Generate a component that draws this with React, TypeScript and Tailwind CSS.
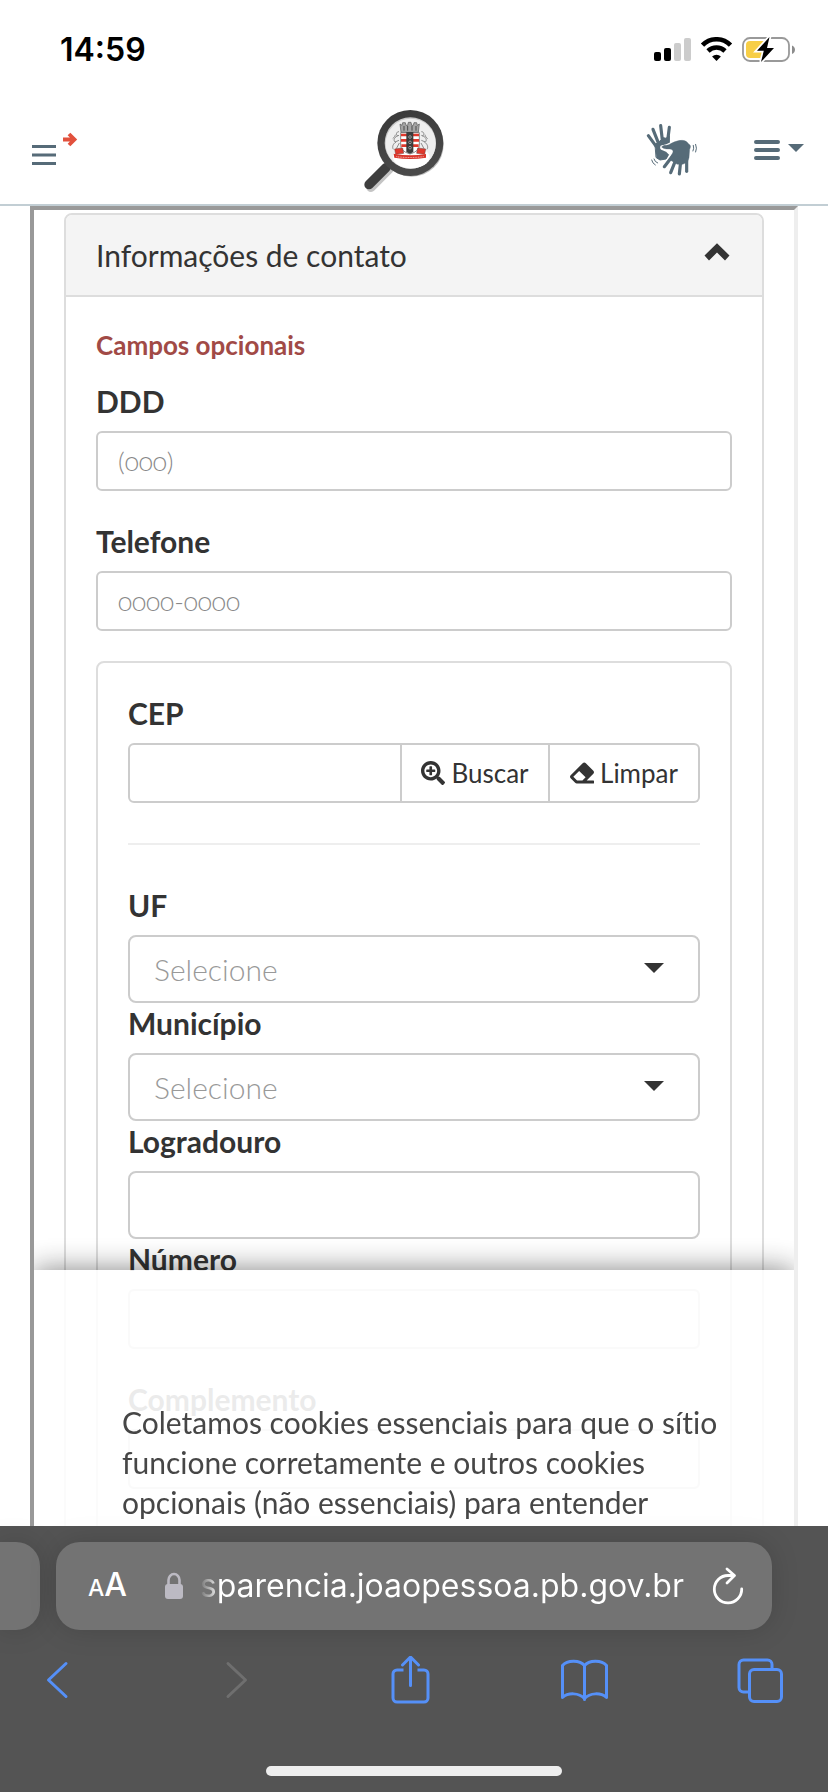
import React from "react";
import { FaEraser, FaSearchPlus } from "react-icons/fa";

function StatusBar() {
  return (
    <div className="flex h-[100px] items-center justify-between pr-8 pl-[60px] font-['Inter',sans-serif]">
      <span className="text-[32px] leading-10 font-semibold text-black">14:59</span>
      <svg className="h-[26px] w-[142px]" viewBox="0 0 142 26" role="img" aria-label="Sinal, Wi-Fi e bateria">
        <rect x="0" y="15" width="7" height="9" rx="2" />
        <rect x="10" y="11" width="7" height="13" rx="2" />
        <rect x="20" y="6" width="7" height="18" rx="2" fill="#cccccc" />
        <rect x="30" y="1" width="7" height="23" rx="2" fill="#cccccc" />
        <g fill="none" stroke="#000" strokeWidth="4.6">
          <path d="M48.5 8.2a19.5 19.5 0 0 1 28 0" />
          <path d="M54 14a12.2 12.2 0 0 1 17 0" />
        </g>
        <path d="M62.5 24l-4.4-4.6a6.4 6.4 0 0 1 8.8 0z" />
        <rect x="89" y="1" width="46" height="23" rx="7" fill="none" stroke="#999" strokeWidth="1.8" />
        <path d="M138 8.5c4 1.500 4 7 0 8.500z" fill="#8c8c8c" />
        <rect x="92" y="4" width="20" height="17" rx="4" fill="#f7ce46" />
        <path d="M115.500 0L103 13.800h6.800L107 25l13-14h-7z" stroke="#fff" strokeWidth="3.500" paintOrder="stroke" />
      </svg>
    </div>
  );
}

function Logo() {
  return (
    <svg className="h-[84px] w-[84px]" viewBox="36 38 252 252" role="img" aria-label="Transparência João Pessoa">
      <defs>
        <linearGradient id="ring" x1="0" y1="0" x2="0.3" y2="1">
          <stop offset="0" stopColor="#383838" />
          <stop offset="1" stopColor="#4a4a4a" />
        </linearGradient>
      </defs>
      <circle cx="185" cy="148" r="96" fill="#bdbdbd" />
      <path d="M118 220L63 276" stroke="#c4c4c4" strokeWidth="28" strokeLinecap="round" />
      <path d="M108 217L57 268" stroke="#3e3e3e" strokeWidth="28" strokeLinecap="round" />
      <circle cx="181" cy="143" r="99" fill="url(#ring)" />
      <circle cx="181" cy="143" r="77" fill="#c9c9c9" />
      <circle cx="182" cy="145" r="75" fill="#eeeeee" />
      <ellipse cx="184" cy="186" rx="55" ry="32" fill="#fff" />
      <path d="M150 86l6 4 2-8h8l2 8h5l2-9h8l2 9h5l2-8h8l2 8 6-4-3 25h-52z" fill="#a4a4a4" stroke="#555" strokeWidth="2" />
      <path d="M162 92v14M173 92v14M186 92v14M198 92v14" stroke="#4b4b4b" strokeWidth="3" />
      <path d="M152 112h56v38q0 18-28 26q-28-8-28-26z" fill="#fff" stroke="#555" strokeWidth="2" />
      <path d="M153 119h54M153 135h54M154 151h52" stroke="#e0382c" strokeWidth="8" />
      <path d="M169 110h21v60l-10 5-11-5z" fill="#3c3c3c" />
      <circle cx="180" cy="125" r="4" fill="none" stroke="#bbb" strokeWidth="2" />
      <circle cx="180" cy="141" r="4" fill="none" stroke="#bbb" strokeWidth="2" />
      <circle cx="180" cy="157" r="4" fill="none" stroke="#bbb" strokeWidth="2" />
      <g fill="none" stroke="#777" strokeWidth="2.500">
        <path d="M147 109c-10 0-9 12-3 13M147 120c-14 4-18 14-12 20l12-5M138 140c-10 6-12 16-8 22M148 143l-9 17M128 130c5-4 7-7 8-12" />
        <path d="M214 109c10 0 9 12 3 13M214 120c14 4 18 14 12 20l-12-5M223 140c10 6 12 16 8 22M213 143l9 17M233 130c-5-4-7-7-8-12" />
      </g>
      <path d="M134 161l24-3 3 16-24 3zM227 161l-24-3-3 16 24 3z" fill="#e0382c" stroke="#6b3a36" strokeWidth="1.500" />
      <path d="M131 175q49 9 97 1v11q-48 8-95 0z" fill="#d93429" />
      <path d="M139 184q41 5 82 0" fill="none" stroke="#f6c3bf" strokeWidth="3" strokeDasharray="3 2" />
    </svg>
  );
}

function HandsIcon() {
  return (
    <svg className="h-[54px] w-[52px]" viewBox="76 54 156 162" fill="#566b78" stroke="#566b78" strokeLinecap="round" strokeLinejoin="round" aria-hidden="true">
      <g strokeWidth="9.500">
        <path d="M83 92L107 125" />
        <path d="M97 73L114 116" />
        <path d="M120 62L126 114" />
        <path d="M146 67L140 114" />
      </g>
      <path d="M104 118L118 108L128 98L136 100L146 92L146 116L154 126L150 146L136 162L118 165L107 158Z" strokeWidth="3" />
      <g stroke="#fff" fill="#fff" strokeWidth="11">
        <path d="M124 126C140 126 160 109 184 106L207 121L206 150L198 166L172 172L152 168L130 188L152 148L140 136L124 129Z" />
      </g>
      <path d="M124 126C126 120 136 121 142 120C156 114 166 106 184 106C194 106 200 111 204 117C212 122 210 126 207 133L205 158L200 172L186 178L170 178L152 167L146 164L156 144C159 138 156 133 148 132C140 132 126 132 124 126Z" strokeWidth="1" />
      <g strokeWidth="9.500">
        <path d="M158 150L131 185" />
        <path d="M168 158L150 203" />
        <path d="M181 160L176 207" />
        <path d="M198 155L198 199" />
      </g>
      <g fill="none" strokeWidth="3">
        <path d="M218 121Q221 130 217 138M225 118Q230 130 225 141" />
        <path d="M100 162Q102 171 111 174M93 165Q95 175 104 180" />
      </g>
    </svg>
  );
}

function NavBar() {
  return (
    <nav className="flex h-[104px] items-center justify-between pr-6 pb-1 pl-[30px]">
      <button type="button" aria-label="Abrir menu" className="flex h-20 w-[132px] items-center">
        <svg className="h-[38px] w-[48px]" viewBox="0 0 48 38" fill="none" aria-hidden="true">
          <path d="M2 15.500h24M2 24h24M2 32.500h24" stroke="#566b78" strokeWidth="3" />
          <path d="M33 8.500h12M39 3l5.500 5.500L39 14" stroke="#e2513d" strokeWidth="3.800" />
        </svg>
      </button>
      <Logo />
      <div className="flex w-[158px] items-center justify-between">
        <button type="button" aria-label="Libras">
          <HandsIcon />
        </button>
        <button type="button" aria-label="Opções">
          <svg className="h-6 w-[50px]" viewBox="0 0 50 24" aria-hidden="true">
            <path d="M2 4h22M2 12h22M2 20h22" stroke="#566b78" strokeWidth="4" strokeLinecap="round" />
            <path d="M34 6h16l-8 8z" fill="#566b78" />
          </svg>
        </button>
      </div>
    </nav>
  );
}

const labelClass = "mb-[10px] block text-[30px] leading-10 font-bold text-[#333]";

function TextField({ id, label, placeholder, tall = false }: { id: string; label: string; placeholder?: string; tall?: boolean }) {
  return (
    <div className={tall ? "" : "mb-[30px]"}>
      <label htmlFor={id} className={labelClass}>
        {label}
      </label>
      <input
        id={id}
        type="text"
        placeholder={placeholder}
        className={
          "block w-full border-2 border-[#ccc] bg-white px-5 text-[26px] oldstyle-nums text-[#333] placeholder:font-light placeholder:text-[#888] " +
          (tall ? "h-[68px] rounded-lg" : "h-[60px] rounded-md")
        }
      />
    </div>
  );
}

function SelectField({ id, label }: { id: string; label: string }) {
  return (
    <div>
      <label htmlFor={id} className={labelClass}>
        {label}
      </label>
      <div className="relative">
        <select id={id} className="block h-[68px] w-full appearance-none rounded-lg border-2 border-[#ccc] bg-white px-6 text-[30px] font-light text-[#999]">
          <option>Selecione</option>
        </select>
        <svg className="pointer-events-none absolute top-7 right-9 h-[10px] w-5" viewBox="0 0 20 10" aria-hidden="true">
          <path d="M0 0h20L10 10z" fill="#333" />
        </svg>
      </div>
    </div>
  );
}

function ContactForm() {
  return (
    <form className="mx-[30px] mt-[3px] rounded-lg border-2 border-[#ddd]">
      <div className="flex h-[82px] items-center justify-between rounded-t-md border-b-2 border-[#ddd] bg-[#f4f4f4] px-[30px]">
        <h2 className="text-[30px] leading-10 text-[#333]">Informações de contato</h2>
        <button type="button" aria-label="Recolher" className="pb-1.5">
          <svg className="h-[18px] w-[30px]" viewBox="0 0 30 18" aria-hidden="true">
            <path d="M2.500 12.500L15 0.300L27.500 12.500L23 17.500L15 9.500L7 17.500Z" fill="#333" />
          </svg>
        </button>
      </div>
      <div className="p-[30px]">
        <p className="mb-[18px] text-[26px] leading-9 font-bold text-[#a14a46]">Campos opcionais</p>
        <TextField id="ddd" label="DDD" placeholder="(000)" />
        <TextField id="telefone" label="Telefone" placeholder="0000-0000" />
        <div className="rounded-lg border-2 border-[#ddd] p-[30px]">
          <label htmlFor="cep" className={labelClass}>
            CEP
          </label>
          <div className="flex h-[60px] text-[26px] text-[#333]">
            <input id="cep" type="text" className="min-w-0 flex-1 rounded-l-md border-2 border-[#ccc] px-5" />
            <button type="button" className="flex w-[148px] items-center justify-center gap-1.5 border-y-2 border-r-2 border-[#ccc] bg-white">
              <FaSearchPlus className="size-6" />
              Buscar
            </button>
            <button type="button" className="flex w-[150px] items-center justify-center gap-1.5 rounded-r-md border-y-2 border-r-2 border-[#ccc] bg-white">
              <FaEraser className="size-6" />
              Limpar
            </button>
          </div>
          <hr className="my-10 border-t-2 border-[#eee]" />
          <SelectField id="uf" label="UF" />
          <SelectField id="municipio" label="Município" />
          <TextField id="logradouro" label="Logradouro" tall />
          <TextField id="numero" label="Número" />
          <TextField id="complemento" label="Complemento" />
        </div>
      </div>
    </form>
  );
}

function CookieNotice() {
  return (
    <aside className="absolute inset-x-0 bottom-0 bg-white px-[88px] pt-[132px] pb-1 text-[30px] leading-10 text-[#333] opacity-90 shadow-[0_0_28px_rgba(0,0,0,0.55)] [font-variant-ligatures:none]">
      <p className="whitespace-nowrap">
        Coletamos cookies essenciais para que o sítio
        <br />
        funcione corretamente e outros cookies
        <br />
        opcionais (não essenciais) para entender
      </p>
    </aside>
  );
}

function BrowserBar() {
  const line = { fill: "none", stroke: "#5590f8", strokeWidth: 3, strokeLinecap: "round", strokeLinejoin: "round" } as const;
  return (
    <footer className="flex flex-col items-center bg-[#545454] pt-4 pb-4 font-['Inter',sans-serif]">
      <div className="flex w-full gap-4 pr-14">
        <div className="h-[88px] w-10 rounded-r-3xl bg-[#737373] shadow-[0_0_28px_rgba(0,0,0,0.15)]" />
        <div className="flex h-[88px] flex-1 items-center rounded-3xl bg-[#737373] pr-7 pl-8 text-white shadow-[0_0_28px_rgba(0,0,0,0.15)]">
          <button type="button" aria-label="Ajustes da página" className="flex items-baseline font-medium">
            <span className="text-[23px] leading-10">A</span>
            <span className="text-[32px] leading-10">A</span>
          </button>
          <svg className="ml-auto h-7 w-5 shrink-0" viewBox="0 0 20 28" aria-hidden="true">
            <path d="M4.500 13V8a5.500 6 0 0 1 11 0v5" fill="none" stroke="#bcbac3" strokeWidth="2.600" />
            <rect x="1" y="12" width="18" height="15" rx="3" fill="#bcbac3" />
          </svg>
          <span className="ml-4 bg-linear-to-r from-transparent to-white to-[20px] bg-clip-text text-[32px] leading-10 text-transparent">
            sparencia.joaopessoa.pb.gov.br
          </span>
          <button type="button" aria-label="Recarregar" className="ml-7">
            <svg className="h-[38px] w-8" viewBox="0 0 32 38" fill="none" stroke="#fff" strokeWidth="2.800" strokeLinecap="round" strokeLinejoin="round" aria-hidden="true">
              <path d="M21 8.500h-5A13.700 13.700 0 1 0 29.700 22" />
              <path d="M15 2l7.500 6.500-7.500 7.500" />
            </svg>
          </button>
        </div>
      </div>
      <div className="mt-[26px] flex w-full justify-between pr-11 pl-[33px]">
        <button type="button" aria-label="Voltar">
          <svg className="size-12" viewBox="0 0 48 48" {...line}>
            <path d="M33 7.500L15.500 24L33 40.500" />
          </svg>
        </button>
        <button type="button" aria-label="Avançar">
          <svg className="size-12" viewBox="0 0 48 48" {...line} stroke="#6f6f6f">
            <path d="M19 7.500L36.500 24L19 40.500" />
          </svg>
        </button>
        <button type="button" aria-label="Compartilhar">
          <svg className="size-12" viewBox="0 0 48 48" {...line}>
            <path d="M18.500 14H12a4 4 0 0 0-4 4v24a4 4 0 0 0 4 4h27a4 4 0 0 0 4-4V18a4 4 0 0 0-4-4h-6.500" strokeLinecap="butt" />
            <path d="M25.500 29.500V1.500M17.500 9l8-8 8 8" />
          </svg>
        </button>
        <button type="button" aria-label="Favoritos">
          <svg className="size-12" viewBox="0 0 48 48" {...line}>
            <path d="M24.500 43.500V9.500C20 4 7.500 3.500 2.500 9.500V41.500C8 36.500 19 36.500 24.500 42.500C30 36.500 41 36.500 46.500 41.500V9.500C41.500 3.500 29 4 24.500 9.500" />
          </svg>
        </button>
        <button type="button" aria-label="Abas">
          <svg className="size-12" viewBox="0 0 48 48" {...line}>
            <rect x="13.500" y="13.500" width="32" height="32" rx="4.500" />
            <path d="M36 13V8.500a4.500 4.500 0 0 0-4.500-4.500H7.500A4.500 4.500 0 0 0 3 8.500V31.500A4.500 4.500 0 0 0 7.500 36H13" strokeLinecap="butt" />
          </svg>
        </button>
      </div>
      <div className="mt-[62px] h-[10px] w-[296px] rounded-full bg-[#eee]" />
    </footer>
  );
}

export default function App() {
  return (
    <div className="flex h-screen flex-col overflow-hidden bg-white font-['Lato','Liberation_Sans',sans-serif]">
      <header className="border-b-2 border-[#c2ced4]">
        <StatusBar />
        <NavBar />
      </header>
      <main className="relative mx-[30px] min-h-0 flex-1 overflow-hidden border-4 border-b-0 border-t-[#999] border-r-[#eee] border-l-[#999]">
        <ContactForm />
        <CookieNotice />
      </main>
      <BrowserBar />
    </div>
  );
}
